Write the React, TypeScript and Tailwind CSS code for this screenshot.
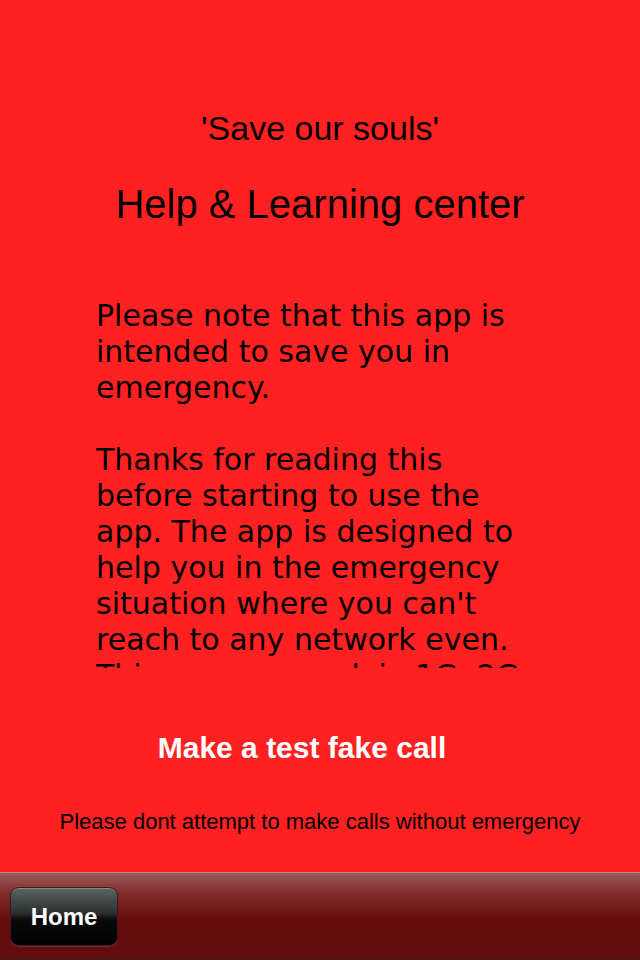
const helpLines = [
  'Please note that this app is',
  'intended to save you in',
  'emergency.',
  '',
  'Thanks for reading this',
  'before starting to use the',
  'app. The app is designed to',
  'help you in the emergency',
  "situation where you can't",
  'reach to any network even.',
  'This app can work in 1G, 2G',
  'and 3G networks as well.',
];

export default function App() {
  return (
    <div className="w-[640px] h-[960px] flex flex-col bg-[#ff2121] overflow-hidden font-['Liberation_Sans',Arial,sans-serif]">
      <div className="flex-1 flex flex-col items-center">
        <h1 className="mt-[108px] text-[34px] leading-[40px] text-black">'Save our souls'</h1>
        <h2 className="mt-[34px] text-[40px] leading-[44px] text-black">Help &amp; Learning center</h2>

        {/* scrolling text view, clipped mid-line like the original */}
        <div className="mt-[72px] self-start ml-[96px] w-[440px] h-[370px] overflow-hidden text-black text-[30px] leading-[36px] font-['DejaVu_Sans',sans-serif]">
          {helpLines.map((line, i) => (
            <div key={i} className="h-[36px] whitespace-nowrap">
              {line}
            </div>
          ))}
        </div>

        <button className="mt-[62px] mr-[36px] text-white font-bold text-[30px] leading-[36px]">
          Make a test fake call
        </button>
        <p className="mt-[43px] text-[22px] leading-[26px] text-black">
          Please dont attempt to make calls without emergency
        </p>
      </div>

      <div className="h-[88px] border-t border-[#c88a86] bg-[linear-gradient(to_bottom,#9d5a58_0%,#7d2a28_25%,#6a1010_50%,#640c0c_52%,#650c0c_95%,#4a1616_100%)] flex items-center px-[10px]">
        <button className="w-[108px] h-[59px] rounded-[9px] border border-[#3a1a18] bg-[linear-gradient(to_bottom,#5a6462_0%,#2a2e2e_45%,#0a0a0a_55%,#000_100%)] shadow-[inset_0_1px_0_rgba(255,255,255,0.25),0_1px_0_rgba(255,255,255,0.15)] text-white font-bold text-[24px]">
          Home
        </button>
      </div>
    </div>
  );
}
